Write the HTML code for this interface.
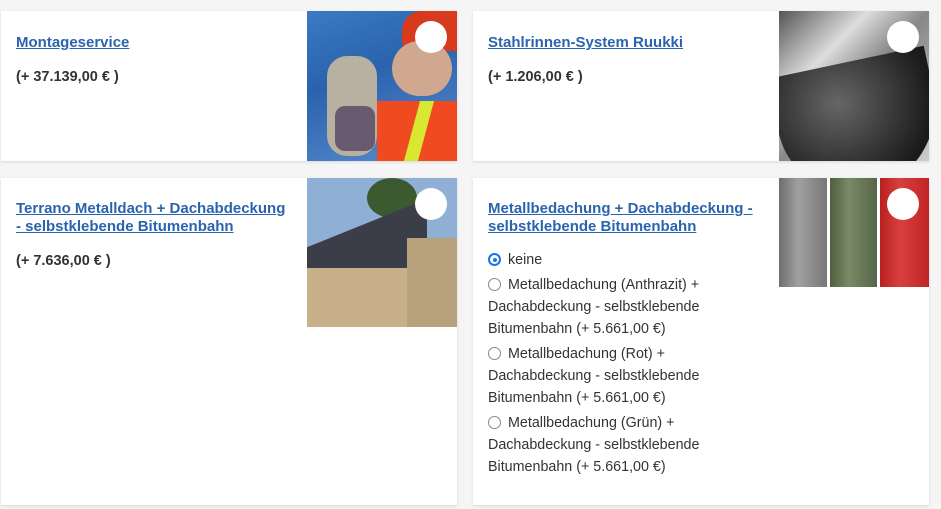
<!DOCTYPE html>
<html><head><meta charset="utf-8"><style>
body{margin:0;background:#f5f5f5;width:941px;height:509px;position:relative;overflow:hidden;font-family:"Liberation Sans",Arial,sans-serif}
.card{position:absolute;background:#fff;box-shadow:0 1px 3px rgba(0,0,0,.12)}
.img{position:absolute;top:0;right:0;width:150px;height:150px;overflow:hidden}
.circ{position:absolute;width:32px;height:32px;border-radius:50%;background:#fff;top:10px;right:10px}
a{position:absolute;left:15px;top:22px;color:#2a64ae;font-weight:bold;font-size:15px;line-height:19px;text-decoration:underline}
.price{position:absolute;left:15px;color:#333;font-weight:bold;font-size:14.5px}
.opts{position:absolute;left:15px;top:68px;font-size:14.3px;color:#333;line-height:22px;width:235px}
.r{display:inline-block;width:13px;height:13px;border:1px solid #888;border-radius:50%;vertical-align:-2px;margin-right:7px;box-sizing:border-box}
.r.on{border:2px solid #1a73e8;position:relative}
.r.on:after{content:"";position:absolute;left:2.5px;top:2.5px;width:4px;height:4px;border-radius:50%;background:#1a73e8}
.opts div{margin-top:3px}
</style></head><body>
<div class="card" style="left:1px;top:11px;width:456px;height:150px">
<a>Montageservice</a><div class="price" style="top:58px">(+ 37.139,00 € )</div>
<div class="img" style="background:linear-gradient(160deg,#3b7bc4 0%,#2a62ad 40%,#5a8fcf 100%)">
<div style="position:absolute;left:95px;top:0;width:60px;height:40px;background:#d83a1e;border-radius:20px 0 0 10px"></div>
<div style="position:absolute;left:85px;top:30px;width:60px;height:55px;background:#d0a890;border-radius:30px"></div>
<div style="position:absolute;left:70px;top:90px;width:80px;height:60px;background:#f04a20"></div>
<div style="position:absolute;left:105px;top:90px;width:14px;height:60px;background:#d8e830;transform:skewX(-15deg)"></div>
<div style="position:absolute;left:20px;top:45px;width:50px;height:100px;background:#b8b0a0;border-radius:20px"></div>
<div style="position:absolute;left:28px;top:95px;width:40px;height:45px;background:#6a5a70;border-radius:10px"></div>
<div class="circ" style="top:10px;right:10px"></div></div></div>

<div class="card" style="left:473px;top:11px;width:456px;height:150px">
<a>Stahlrinnen-System Ruukki</a><div class="price" style="top:58px">(+ 1.206,00 € )</div>
<div class="img" style="background:linear-gradient(135deg,#555 0%,#ddd 30%,#888 50%,#ccc 100%)">
<div style="position:absolute;left:0;top:50px;width:160px;height:130px;background:radial-gradient(ellipse at 40% 30%,#666,#1a1a1a 70%);border-radius:0 0 90px 80px;transform:rotate(-12deg)"></div>
<div class="circ"></div></div></div>

<div class="card" style="left:1px;top:178px;width:456px;height:327px">
<a style="top:22px;line-height:18px">Terrano Metalldach + Dachabdeckung<br>- selbstklebende Bitumenbahn</a><div class="price" style="top:75px">(+ 7.636,00 € )</div>
<div class="img" style="height:149px;background:#8fb0d4">
<div style="position:absolute;left:60px;top:0;width:50px;height:40px;background:#3c5a30;border-radius:50%"></div>
<div style="position:absolute;left:0;top:45px;width:120px;height:65px;background:#3b3e48;transform:skewY(-22deg)"></div>
<div style="position:absolute;left:0;top:90px;width:150px;height:60px;background:#c8b08a"></div>
<div style="position:absolute;left:100px;top:60px;width:50px;height:90px;background:#b8a27e"></div>
<div class="circ"></div></div></div>

<div class="card" style="left:473px;top:178px;width:456px;height:327px">
<a style="top:22px;line-height:18px">Metallbedachung + Dachabdeckung -<br>selbstklebende Bitumenbahn</a>
<div class="opts">
<div><span class="r on"></span>keine</div>
<div><span class="r"></span>Metallbedachung (Anthrazit) + Dachabdeckung - selbstklebende Bitumenbahn (+ 5.661,00 €)</div>
<div><span class="r"></span>Metallbedachung (Rot) + Dachabdeckung - selbstklebende Bitumenbahn (+ 5.661,00 €)</div>
<div><span class="r"></span>Metallbedachung (Grün) + Dachabdeckung - selbstklebende Bitumenbahn (+ 5.661,00 €)</div>
</div>
<div style="position:absolute;right:0;top:0;width:150px;height:109px;background:#fff">
<div style="position:absolute;left:0;width:48px;height:109px;background:linear-gradient(90deg,#6e6e6e,#a0a0a0 40%,#777)"></div>
<div style="position:absolute;left:51px;width:47px;height:109px;background:linear-gradient(90deg,#4e5e40,#7a8a66 40%,#556548)"></div>
<div style="position:absolute;left:101px;width:49px;height:109px;background:linear-gradient(90deg,#b82020,#d84040 40%,#c02424)"></div>
<div class="circ"></div></div></div>
</body></html>
